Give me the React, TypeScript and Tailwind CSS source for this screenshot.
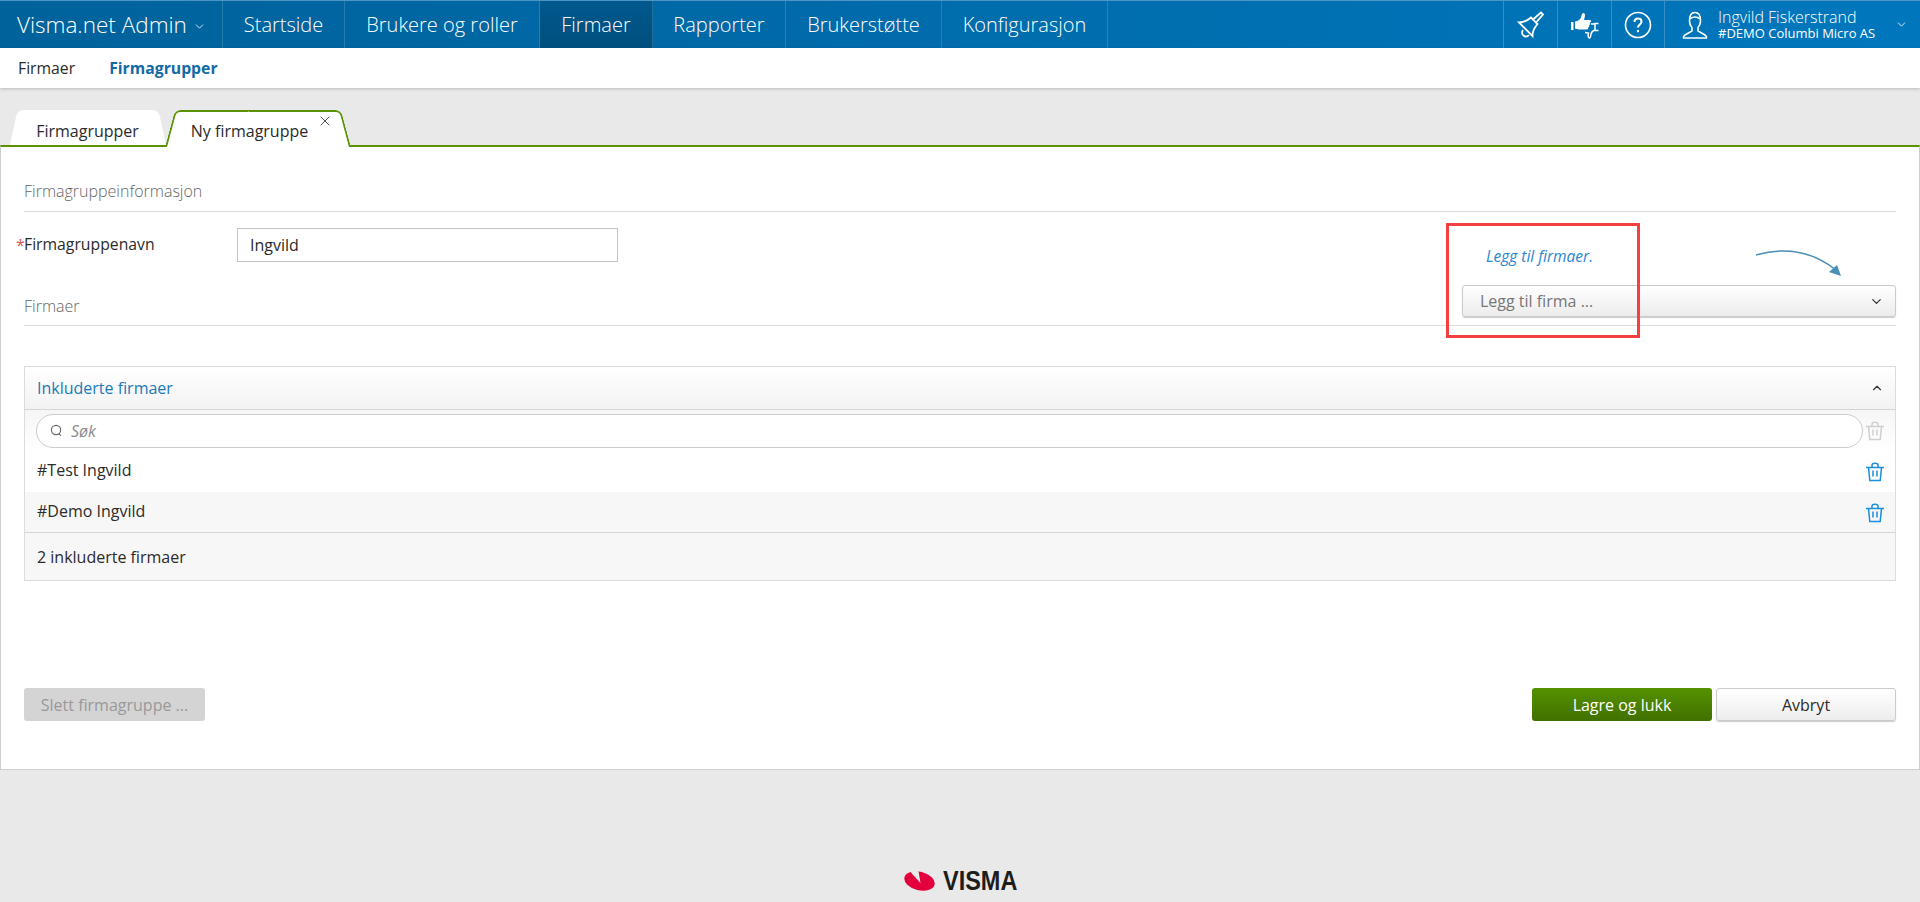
import { ChevronDown, ChevronUp, X } from 'lucide-react';

const navItems = [
  { label: 'Startside', width: 'w-[122px]' },
  { label: 'Brukere og roller', width: 'w-[195px]' },
  { label: 'Firmaer', width: 'w-[113px]', active: true },
  { label: 'Rapporter', width: 'w-[133px]' },
  { label: 'Brukerstøtte', width: 'w-[156px]' },
  { label: 'Konfigurasjon', width: 'w-[166px]' },
];

const companies = [
  { name: '#Test Ingvild', bg: 'bg-white' },
  { name: '#Demo Ingvild', bg: 'bg-[#f7f7f7]' },
];

const TrashIcon = ({ className }: { className: string }) => (
  <svg viewBox="0 0 20 20" fill="none" stroke="currentColor" strokeWidth="1.5" className={className}>
    <path d="M1 5.500h18M3.500 5.500l1.300 13h10.400l1.300-13" />
    <path d="M7 5V3.200C7 2 8 1.200 10 1.200s3 .8 3 2V5" />
    <path d="M8 8.500v6M12 8.500v6" />
  </svg>
);

const BellIcon = () => (
  <svg viewBox="0 0 30 30" fill="none" stroke="white" strokeWidth="1.800" className="h-[30px] w-[30px]">
    <path d="M17.500 9 L25 2.500 L27 4.500 L20.500 12" />
    <path d="M3 12.500 C7 12.500 11 11 15 7.500 L21.500 14 C18 18 16.500 22 16.500 26 Z" />
    <path d="M7 20 C5.500 22 6 24.500 7.500 25.500 C9 27 11.500 27 13 25" />
  </svg>
);

const ThumbsIcon = () => (
  <svg viewBox="0 0 30 30" className="h-[30px] w-[30px]">
    <path d="M1 12h2.500v8H1z" fill="white" />
    <path d="M5 11.500c3.500-.5 5-2 6-4 .7-1.500.5-4 2-4.500 2-.5 2.500 2 1.500 5l-.5 2h6c1.500 0 1.500 2.500 0 2.500h-.5c1 .5 1 2.500-.5 2.500 .8.800 .3 2.500-1 2.500 .5 1 0 2-1.500 2H9c-2 0-3-1-4-1z" fill="white" />
    <path d="M28.500 13.500H25v7h3.500M25 14h-4M25 20c-2 .5-3.500 2-4 4-.3 1.500-.5 4-1.500 4-1.800 0-1.500-3-1-5l-3.500-.5" fill="none" stroke="white" strokeWidth="1.500" />
  </svg>
);

const UserIcon = () => (
  <svg viewBox="0 0 26 28" fill="none" stroke="white" strokeWidth="1.500" className="h-[28px] w-[26px]">
    <path d="M7.500 9.500C7.500 4 10 1.500 13 1.500s5.500 2.500 5.500 8c0 3-1 5.500-2.500 7v3.500c2 1.500 6 2.500 8.500 5.500v1.500H1.500V25.500C4 22.500 8 21.500 10 20v-3.500c-1.500-1.500-2.500-4-2.500-7z" />
    <path d="M8 8c2-2.500 7-3 10 0" />
  </svg>
);

const App = () => {
  return (
    <div className="relative min-h-screen overflow-hidden bg-[#e9e9e9] font-['Open_Sans',sans-serif] text-[16px] text-[#2b2b2b]">
      {/* Top navigation */}
      <header className="flex h-[48px] border-t border-t-[#4b96c4] bg-gradient-to-r from-[#00629b] to-[#0077bd] text-white">
        <div className="flex w-[223px] items-center border-r border-white/15 pl-[17px] text-[22.500px] font-light">
          Visma.net Admin
          <ChevronDown className="ml-[6px] mt-[3px] h-[13px] w-[13px]" strokeWidth={1.5} />
        </div>
        {navItems.map((item) => (
          <div
            key={item.label}
            className={`flex items-center justify-center border-r border-white/15 text-[20px] font-light ${item.width} ${
              item.active ? 'bg-gradient-to-b from-[#00598d] to-[#004f7e]' : ''
            }`}
          >
            {item.label}
          </div>
        ))}
        <div className="ml-auto flex">
          <div className="flex w-[54px] items-center justify-center border-l border-white/20"><BellIcon /></div>
          <div className="flex w-[54px] items-center justify-center border-l border-white/20"><ThumbsIcon /></div>
          <div className="flex w-[53px] items-center justify-center border-l border-white/20">
            <svg viewBox="0 0 28 28" className="h-[28px] w-[28px]" fill="none" stroke="white" strokeWidth="1.600">
              <circle cx="14" cy="14" r="12.500" />
              <path d="M10.500 11c0-2.200 1.500-3.500 3.500-3.500s3.500 1.300 3.500 3.200c0 2.800-3.500 2.800-3.500 5.800" strokeWidth="2" />
              <path d="M14 19v2.200" strokeWidth="2.200" />
            </svg>
          </div>
          <div className="flex w-[256px] items-center border-l border-white/20 pl-[17px]">
            <UserIcon />
            <div className="ml-[10px] flex w-[165px] flex-col">
              <span className="text-[16px] font-light leading-[17px]">Ingvild Fiskerstrand</span>
              <span className="whitespace-nowrap text-[13px] leading-[15px]">#DEMO Columbi Micro AS</span>
            </div>
            <ChevronDown className="ml-[12px] h-[13px] w-[13px]" strokeWidth={1.5} />
          </div>
        </div>
      </header>

      {/* Sub navigation */}
      <nav className="flex h-[40px] items-center gap-[34px] bg-white pl-[18px] pt-[1px] text-[15.750px] shadow-[0_1px_3px_rgba(0,0,0,0.2)]">
        <span>Firmaer</span>
        <span className="font-bold text-[#126aa5]">Firmagrupper</span>
      </nav>

      {/* Tabs */}
      <div className="relative z-10 -mb-[2px] mt-[22px] flex h-[37px] pl-[10px]">
        <div className="relative flex w-[155px] items-center justify-center pt-[4px]">
          <span className="absolute inset-y-0 bottom-[2px] left-0 w-1/2 origin-bottom -skew-x-[12deg] rounded-tl-[6px] bg-white" />
          <span className="absolute inset-y-0 bottom-[2px] right-0 w-1/2 origin-bottom skew-x-[12deg] rounded-tr-[6px] bg-white" />
          <span className="relative">Firmagrupper</span>
        </div>
        <div className="relative flex w-[185px] items-center justify-center pr-[16px] pt-[4px]">
          <span className="absolute inset-y-0 left-0 w-1/2 origin-bottom -skew-x-[15deg] rounded-tl-[6px] border-l-2 border-t-2 border-[#5b9200] bg-white" />
          <span className="absolute inset-y-0 right-0 w-1/2 origin-bottom skew-x-[15deg] rounded-tr-[6px] border-r-2 border-t-2 border-[#5b9200] bg-white" />
          <span className="relative">Ny firmagruppe</span>
          <X className="absolute right-[17px] top-[3px] h-[16px] w-[16px] text-[#555]" strokeWidth={1.5} />
        </div>
      </div>

      {/* Panel */}
      <main className="border border-t-2 border-[#cfcfcf] border-t-[#5b9200] bg-white px-[23px] pb-[48px]">
        <div className="mt-[24px] flex h-[41px] items-center border-b border-[#dcdcdc] font-light text-[#666]">
          Firmagruppeinformasjon
        </div>

        <div className="relative mt-[16px] flex h-[34px] items-center">
          <span className="absolute -left-[8px] text-[#d9534f]">*</span>
          <label className="w-[213px] text-[15.750px]">Firmagruppenavn</label>
          <input
            readOnly
            value="Ingvild"
            className="h-[34px] w-[381px] border border-[#c4c4c4] px-[12px] outline-none"
          />
        </div>

        <div className="flex h-[64px] items-end justify-between border-b border-[#dcdcdc] pb-[8px]">
          <span className="mb-[1px] font-light leading-[20px] text-[#666]">Firmaer</span>
          <div className="flex h-[32px] w-[434px] items-center justify-between rounded-[3px] border border-[#cbcbcb] bg-gradient-to-b from-white to-[#ececec] pl-[17px] pr-[11px] text-[#777] shadow-[0_1px_1px_rgba(0,0,0,0.2)]">
            Legg til firma ...
            <ChevronDown className="h-[15px] w-[15px] text-[#333]" strokeWidth={2} />
          </div>
        </div>

        {/* Included companies */}
        <section className="mt-[40px] border border-[#dcdcdc]">
          <div className="flex h-[43px] items-center justify-between border-b border-[#d5d5d5] bg-gradient-to-b from-white to-[#f3f3f3] pl-[12px] pr-[11px] text-[#1b7ab8]">
            Inkluderte firmaer
            <ChevronUp className="h-[14px] w-[14px] text-[#333]" strokeWidth={2} />
          </div>
          <div className="flex h-[41px] items-center gap-[2px] bg-gradient-to-b from-[#f6f6f6] to-white pl-[11px] pr-[10px]">
            <div className="flex h-[34px] flex-1 items-center rounded-full border border-[#cccccc] bg-white pl-[13px]">
              <svg viewBox="0 0 14 14" fill="none" stroke="#666" strokeWidth="1.200" className="h-[13px] w-[13px]">
                <circle cx="6.500" cy="6.500" r="5" />
                <path d="M9.500 10.500l2.500 2" />
              </svg>
              <span className="ml-[8px] italic text-[#8a8a8a]">Søk</span>
            </div>
            <TrashIcon className="h-[20px] w-[20px] text-[#cfcfcf]" />
          </div>
          {companies.map((company) => (
            <div key={company.name} className={`flex h-[40.500px] items-center justify-between pl-[12px] pr-[10px] ${company.bg}`}>
              <span className="-mt-[2px]">{company.name}</span>
              <TrashIcon className="mt-[2px] h-[20px] w-[20px] text-[#1a8fdc]" />
            </div>
          ))}
          <div className="flex h-[48px] items-center border-t border-[#d5d5d5] bg-[#f7f7f7] pl-[12px]">2 inkluderte firmaer</div>
        </section>

        {/* Actions */}
        <div className="mt-[107px] flex items-center">
          <button className="h-[33px] w-[181px] rounded-[3px] bg-[#d4d4d4] text-[#999]">Slett firmagruppe ...</button>
          <button className="ml-auto h-[33px] w-[180px] rounded-[3px] bg-gradient-to-b from-[#559200] to-[#417000] text-white">Lagre og lukk</button>
          <button className="ml-[4px] h-[33px] w-[180px] rounded-[3px] border border-[#cbcbcb] bg-gradient-to-b from-white to-[#ededed] shadow-[0_1px_1px_rgba(0,0,0,0.2)]">Avbryt</button>
        </div>
      </main>

      {/* Footer logo */}
      <footer className="mt-[100px] flex items-center justify-center gap-[8px]">
        <svg viewBox="0 0 32 22" className="h-[22px] w-[31px]">
          <ellipse cx="16" cy="11" rx="16" ry="9.500" fill="#e4003c" transform="rotate(14 16 11)" />
          <path d="M5 0 L17 13 L15 1 Z" fill="#e9e9e9" />
        </svg>
        <span className="w-[73px] origin-left scale-x-[0.87] whitespace-nowrap font-['Liberation_Sans',sans-serif] text-[27px] font-bold leading-[22px] text-[#1d1d1b]">VISMA</span>
      </footer>

      {/* Annotation over the screenshot */}
      <div className="absolute left-[1446px] top-[223px] h-[115px] w-[194px] border-[3px] border-[#f44040]" />
      <span className="absolute left-[1486px] top-[245px] text-[15.500px] italic text-[#2a86d0]">Legg til firmaer.</span>
      <svg viewBox="0 0 90 30" className="absolute left-[1754px] top-[248px] h-[30px] w-[90px]" fill="none">
        <path d="M2 7 C30 -1 58 3 82 22" stroke="#4a8fb5" strokeWidth="1.500" />
        <path d="M87 28 L75 24 L83 17 Z" fill="#4a8fb5" />
      </svg>
    </div>
  );
};

export default App;
